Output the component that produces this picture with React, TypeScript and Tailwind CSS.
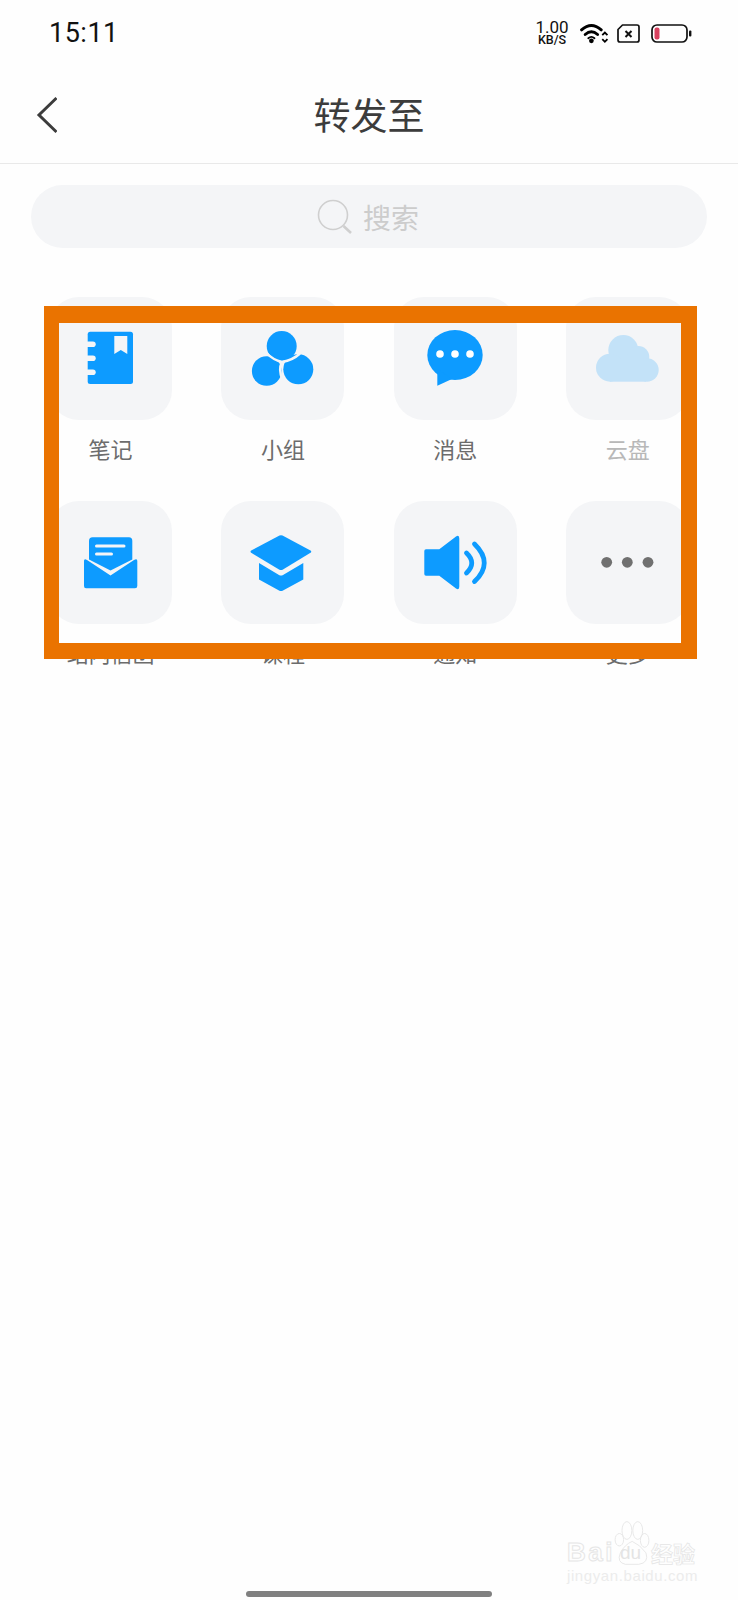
const BLUE = "#0d9bff";
const TILE = "#f4f5f7";

function Notebook() {
  return (
    <>
      <rect x="38.7" y="34.7" width="45.3" height="52.3" rx="2.5" fill={BLUE} />
      <path d="M65.3 39H78.3V57L71.8 53L65.3 57Z" fill={TILE} />
      <rect x="36" y="44.5" width="10.7" height="5.6" rx="2.8" fill={TILE} />
      <rect x="36" y="58.5" width="10.7" height="5.6" rx="2.8" fill={TILE} />
      <rect x="36" y="72.5" width="10.7" height="5.6" rx="2.8" fill={TILE} />
    </>
  );
}
function Group() {
  return (
    <>
      <circle cx="45.7" cy="74" r="14.8" fill={BLUE} />
      <circle cx="77.3" cy="72.3" r="15" fill={BLUE} />
      <circle cx="60.7" cy="49" r="15" fill={BLUE} />
      <path d="M45 55.5Q52 63 61 65M79 56.5Q72 63 61 65Q57 72 61.5 83" stroke={TILE} strokeWidth="2.4" fill="none" />
    </>
  );
}
function Bubble() {
  return (
    <>
      <ellipse cx="61" cy="58" rx="27.7" ry="25" fill={BLUE} />
      <path d="M43.3 72V88.7L58 82Z" fill={BLUE} />
      <circle cx="46" cy="57" r="3.8" fill="#fff" />
      <circle cx="61" cy="57" r="3.8" fill="#fff" />
      <circle cx="76" cy="57" r="3.8" fill="#fff" />
    </>
  );
}
function Cloud() {
  const c = "#c3e2f8";
  return (
    <>
      <circle cx="57.3" cy="53" r="15" fill={c} />
      <circle cx="72.3" cy="60" r="11" fill={c} />
      <circle cx="81" cy="73" r="11.7" fill={c} />
      <circle cx="44" cy="70.7" r="14" fill={c} />
      <rect x="44" y="62" width="36" height="22.7" fill={c} />
    </>
  );
}
function Mail() {
  return (
    <>
      <path d="M35 60Q35 57 38 59L61.5 74.5L85 59Q88.3 57 88.3 60V85Q88.3 87.3 86 87.3H37Q35 87.3 35 85Z" fill={BLUE} />
      <path d="M43.5 36.3H80Q83.3 36.3 83.3 40V58.5L61.5 69.5L40 58.5V40Q40 36.3 43.5 36.3Z" fill={BLUE} />
      <path d="M47.5 45H75M47.5 53H62.5" stroke={TILE} strokeWidth="3" strokeLinecap="round" fill="none" />
    </>
  );
}
function Cap() {
  return (
    <>
      <path d="M58.5 34.6Q60 34 61.5 34.6L89.5 49.6Q91 50.7 89.5 51.8L62 68.4Q60 69.4 58 68.4L30.2 51.8Q28.8 50.7 30.2 49.6Z" fill={BLUE} />
      <path d="M38 62L58 74Q60 75 62 74L82.3 62V78.5L62 89.6Q60 90.6 58 89.6L38 78.5Z" fill={BLUE} />
    </>
  );
}
function Speaker() {
  return (
    <>
      <path d="M32 48.3H45.3L62 35.5Q65.3 33.5 65.3 37.5V85.5Q65.3 89.5 62 87.5L45.3 74.7H32Q30.3 74.7 30.3 73V50Q30.3 48.3 32 48.3Z" fill={BLUE} />
      <path d="M72.5 52Q83 62 72.5 72" stroke={BLUE} strokeWidth="4.8" strokeLinecap="round" fill="none" />
      <path d="M80.5 43Q100 62 80.5 80.5" stroke={BLUE} strokeWidth="4.8" strokeLinecap="round" fill="none" />
    </>
  );
}
function More() {
  return (
    <>
      <circle cx="40.7" cy="61.3" r="5.4" fill="#707070" />
      <circle cx="61.3" cy="61.3" r="5.4" fill="#707070" />
      <circle cx="82" cy="61.3" r="5.4" fill="#707070" />
    </>
  );
}

const items = [
  { label: "笔记", icon: <Notebook /> },
  { label: "小组", icon: <Group /> },
  { label: "消息", icon: <Bubble /> },
  { label: "云盘", icon: <Cloud />, muted: true },
  { label: "站内信函", icon: <Mail /> },
  { label: "课程", icon: <Cap /> },
  { label: "通知", icon: <Speaker /> },
  { label: "更多", icon: <More /> },
];

function Tile({ label, icon, muted }: { label: string; icon: React.ReactNode; muted?: boolean }) {
  return (
    <div className="flex w-[123px] flex-col items-center">
      <div className="h-[123px] w-[123px] rounded-[30px] bg-[#f4f5f7]">
        <svg viewBox="0 0 123 123" className="h-[123px] w-[123px]">{icon}</svg>
      </div>
      <div className={`mt-[13px] mb-[38px] h-[30px] text-[22px] leading-[30px] ${muted ? "text-[#b8b8b8]" : "text-[#6c6c6c]"}`}>
        {label}
      </div>
    </div>
  );
}

function StatusIcons() {
  return (
    <div className="flex items-center">
      <div className="flex w-[34px] flex-col items-center font-['Roboto',sans-serif] text-[#111111]">
        <span className="text-[17px] leading-[14px]">1.00</span>
        <span className="text-[12.5px] leading-[12px] font-medium">KB/S</span>
      </div>
      <svg viewBox="0 0 28 21" className="ml-[11px] h-[22px] w-[29px]">
        <path d="M1.5 7.5Q11 -1 20.5 7.5" stroke="#000" strokeWidth="2.8" fill="none" strokeLinecap="round" />
        <path d="M5 12Q11 6.5 17 12" stroke="#000" strokeWidth="2.8" fill="none" strokeLinecap="round" />
        <path d="M8 15.5Q11 13 14 15.5" stroke="#000" strokeWidth="1.8" fill="none" strokeLinecap="round" />
        <circle cx="11" cy="18" r="2.3" fill="#000" />
        <path d="M21.5 12.5L24 10L26.5 12.5M21.5 16.5L24 19L26.5 16.5" stroke="#000" strokeWidth="1.8" fill="none" />
      </svg>
      <svg viewBox="0 0 23 19" className="ml-[8px] h-[19px] w-[23px]">
        <path d="M5.5 1H20Q22 1 22 3V16Q22 18 20 18H3Q1 18 1 16V5.5Z" stroke="#111" strokeWidth="1.7" fill="none" strokeLinejoin="round" />
        <path d="M8.5 7L14.5 13M14.5 7L8.5 13" stroke="#111" strokeWidth="2" />
      </svg>
      <svg viewBox="0 0 41 19" className="ml-[11px] h-[19px] w-[41px]">
        <rect x="1" y="1" width="35" height="17" rx="5" stroke="#111" strokeWidth="1.7" fill="none" />
        <rect x="3.5" y="3.5" width="5" height="12" rx="2" fill="#d8415f" />
        <rect x="38" y="6.5" width="2.4" height="6" rx="1" fill="#111" />
      </svg>
    </div>
  );
}

function Watermark() {
  return (
    <div className="absolute left-[567px] top-[1520px] flex w-[132px] flex-col font-['Liberation_Sans',sans-serif]">
      <div className="flex h-[46px] items-end">
        <span className="mb-[1px] text-[26px] leading-[26px] font-bold tracking-[2.5px] text-transparent [-webkit-text-stroke:1px_#e6e6e6]">Bai</span>
        <div className="relative ml-[-2px] h-[46px] w-[38px]">
          <svg viewBox="190 30 115 140" className="absolute inset-0 h-[46px] w-[38px]" fill="none" stroke="#e8e8e8" strokeWidth="3">
            <ellipse cx="209" cy="90" rx="13" ry="19" />
            <ellipse cx="232" cy="62" rx="15" ry="27" />
            <ellipse cx="265" cy="62" rx="15" ry="27" />
            <ellipse cx="286" cy="92" rx="13" ry="21" />
            <path d="M248 95Q225 105 212 130Q200 160 228 165H268Q300 160 290 130Q272 105 248 95Z" />
          </svg>
          <span className="absolute bottom-[2px] left-[7px] text-[19px] leading-[22px] text-[#e4e4e4]">du</span>
        </div>
        <span className="mb-[1px] font-['Noto_Sans_CJK_SC',sans-serif] text-[22px] leading-[26px] font-bold text-transparent [-webkit-text-stroke:0.7px_#e4e4e4]">经验</span>
      </div>
      <div className="mt-[1px] text-[15px] leading-[18px] tracking-[0.6px] text-[#ececec]">jingyan.baidu.com</div>
    </div>
  );
}

export default function App() {
  return (
    <div className="relative h-[1600px] w-[738px] overflow-hidden bg-[#fefefe] font-['Noto_Sans_CJK_SC',sans-serif]">
      <div className="flex h-[66px] items-center justify-between pl-[49px] pr-[46px]">
        <span className="font-['Roboto',sans-serif] text-[27px] leading-none tracking-[0.5px] text-[#111111]">15:11</span>
        <StatusIcons />
      </div>
      <div className="grid h-[98px] grid-cols-[1fr_auto_1fr] items-center border-b border-[#e9e9e9]">
        <svg viewBox="0 0 24 38" className="ml-[33px] h-[38px] w-[24px]">
          <path d="M23.5 2L6 19L23.5 36" stroke="#3c3c3c" strokeWidth="3" fill="none" />
        </svg>
        <div className="text-[37px] leading-none text-[#3c3c3c]">转发至</div>
        <div />
      </div>
      <div className="mx-[31px] mt-[21px] flex h-[63px] items-center justify-center rounded-full bg-[#f4f5f7] pr-[2px]">
        <svg viewBox="0 0 36 36" className="h-[36px] w-[36px]" fill="none" stroke="#cfcfcf">
          <circle cx="16" cy="16" r="14.5" strokeWidth="1.6" />
          <path d="M26.5 27L34 34" strokeWidth="2.6" />
        </svg>
        <span className="ml-[10px] text-[28px] leading-none text-[#cccccc]">搜索</span>
      </div>
      <div className="mt-[49px] grid grid-cols-[123px_123px_123px_123px] justify-start gap-x-[49.4px] pl-[49px]">
        {items.map((it) => (
          <Tile key={it.label} {...it} />
        ))}
      </div>
      <div className="absolute left-[44px] top-[306px] h-[353px] w-[653px] border-[16px] border-t-[17px] border-l-[15px] border-[#ea7300]" />
      <div className="absolute left-[246px] top-[1591px] h-[6px] w-[246px] rounded-full bg-[#808080]" />
      <Watermark />
    </div>
  );
}
